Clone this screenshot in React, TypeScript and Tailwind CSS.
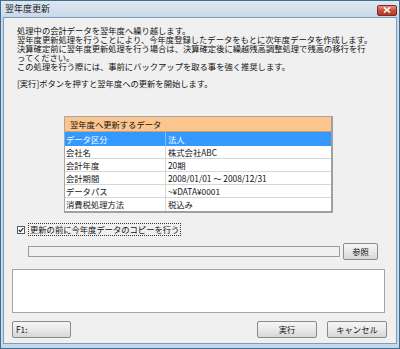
import React from "react";

const rows: [string, string][] = [
  ["会社名", "株式会社ABC"],
  ["会計年度", "20期"],
  ["会計期間", "2008/01/01 ～ 2008/12/31"],
  ["データパス", "~¥DATA¥0001"],
  ["消費税処理方法", "税込み"],
];

function Btn({ label, className = "" }: { label: string; className?: string }) {
  return (
    <div
      className={
        "h-[17px] flex items-center border border-[#8a8a8a] rounded-[2px] bg-gradient-to-b from-[#f6f6f6] via-[#e9e9e9] to-[#d6d6d6] text-[8.3px] text-[#111] " +
        className
      }
    >
      {label}
    </div>
  );
}

export default function App() {
  return (
    <div
      className="w-[400px] h-[349px] flex flex-col bg-[#c6d7e9] border border-[#3f6f8f] overflow-hidden"
      style={{ fontFamily: '"Noto Sans CJK JP", "Noto Sans", sans-serif' }}
    >
      {/* タイトルバー */}
      <div className="h-[15px] flex items-center justify-between pl-[4px] pr-[2px] bg-gradient-to-b from-[#dde7f1] to-[#cbdae9]">
        <span className="text-[9px] leading-none text-[#1a1a1a]">翌年度更新</span>
        <div className="w-[20px] h-[11px] mt-[3px] flex items-center justify-center rounded-[2px] border border-[#7a2a20] bg-gradient-to-b from-[#e4917f] via-[#c7503c] to-[#b23a26]">
          <svg width="8" height="6" viewBox="0 0 8 6">
            <path d="M1 0.5 L7 5.5 M7 0.5 L1 5.5" stroke="#fff" strokeWidth="1.6" />
          </svg>
        </div>
      </div>

      {/* クライアント領域 */}
      <div className="flex-1 mx-[2px] mt-[1px] mb-[4px] bg-[#f0f0f0] border border-[#7f9db9] flex flex-col text-[#111]">
        <div className="pt-[8px] pl-[13px] text-[8.3px] leading-[9px] whitespace-nowrap">
          <div>処理中の会計データを翌年度へ繰り越します。</div>
          <div>翌年度更新処理を行うことにより、今年度登録したデータをもとに次年度データを作成します。</div>
          <div>決算確定前に翌年度更新処理を行う場合は、決算確定後に繰越残高調整処理で残高の移行を行</div>
          <div>ってください。</div>
          <div>この処理を行う際には、事前にバックアップを取る事を強く推奨します。</div>
          <div className="mt-[8px]">[実行]ボタンを押すと翌年度への更新を開始します。</div>
        </div>

        {/* データ表 */}
        <div className="ml-[60px] mt-[28px] w-[269px] border-l border-t border-[#a8a8a8] border-r-2 border-b-2 border-r-[#a0a0a0] border-b-[#a0a0a0] bg-white text-[8.3px]">
          <div className="h-[15px] flex items-center pl-[5px] bg-[#fdc58e] border-b border-[#c8a27a]">
            翌年度へ更新するデータ
          </div>
          <div className="h-[14px] flex items-center bg-[#3399ff] text-white">
            <div className="w-[101px] pl-[1px] border-r border-[#7fbfff] h-full flex items-center">データ区分</div>
            <div className="pl-[2px]">法人</div>
          </div>
          {rows.map(([k, v], i) => (
            <div
              key={k}
              className={
                "h-[13px] flex items-center " + (i < rows.length - 1 ? "border-b border-[#d6d6d6]" : "")
              }
            >
              <div className="w-[101px] pl-[1px] border-r border-[#d6d6d6] h-full flex items-center">{k}</div>
              <div className="pl-[2px]">{v}</div>
            </div>
          ))}
        </div>

        {/* チェックボックス */}
        <div className="mt-[10px] h-[13px] flex items-center pl-[13px]">
          <div className="w-[8px] h-[8px] border border-[#5a5a5a] bg-white flex items-center justify-center">
            <svg width="6" height="6" viewBox="0 0 6 6">
              <path d="M0.8 3 L2.4 4.6 L5.3 1.2" stroke="#222" strokeWidth="1.1" fill="none" />
            </svg>
          </div>
          <span className="ml-[3px] px-[1px] h-[13px] flex items-center border border-dotted border-[#333] text-[8.3px]">
            更新の前に今年度データのコピーを行う
          </span>
        </div>

        {/* パス入力 */}
        <div className="mt-[8px] h-[14px] flex items-center pl-[24px]">
          <div className="w-[312px] h-[11px] border border-[#9c9c9c] bg-[#f0f0f0]" />
          <Btn label="参照" className="ml-[3px] w-[35px] h-[14px] justify-center" />
        </div>

        {/* メッセージ欄 */}
        <div className="mt-[11px] ml-[8px] w-[373px] h-[44px] border border-[#a5a5a5] bg-white" />

        {/* ボタン */}
        <div className="mt-[8px] flex items-center pl-[8px]">
          <Btn label="F1:" className="w-[59px] pl-[3px]" />
          <Btn label="実行" className="ml-auto w-[60px] justify-center" />
          <Btn label="キャンセル" className="ml-[10px] mr-[9px] w-[60px] justify-center" />
        </div>
      </div>
    </div>
  );
}
